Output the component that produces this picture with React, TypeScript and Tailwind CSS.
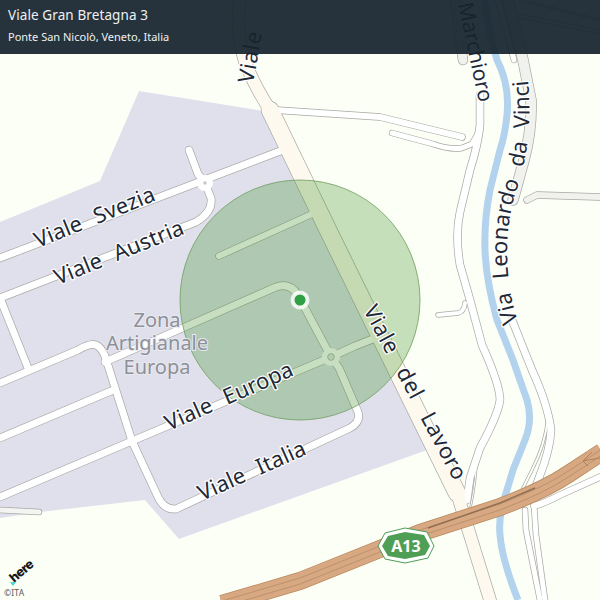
const BG = "#fbfff6";
const CASE = "#a8a8a4";

type Road = { d: string; w: number; fill?: string };

const roads: Road[] = [
  // Zone roads
  { d: "M0 258 L283 150", w: 7 },
  { d: "M189 150 L198 174 L205 183", w: 7 },
  { d: "M0 298 L196 222 Q213 212 211 198 L205 183", w: 7 },
  { d: "M0 298 L28 368", w: 7 },
  { d: "M0 383 L78 350 Q90 343 96 345 Q101 347 105 356 L132 441 L158 497 Q164 510 176 509 L350 428 Q361 422 358 412 L339 368 L331 357", w: 7 },
  { d: "M0 438 L111 391", w: 7 },
  { d: "M0 497 L132 441 L331 357", w: 7 },
  { d: "M105 362 L276 287 Q290 282 298 295 L331 357", w: 7 },
  { d: "M331 357 L355 346 L378 337", w: 7 },
  { d: "M219 256 L312 214", w: 6 },
  { d: "M0 510 L39 512", w: 5, fill: "#f4f4f2" },
  // Other thin roads
  { d: "M275 110 L380 117 L462 137", w: 6 },
  { d: "M392 133 L433 144 Q450 150 462 148 L472 144 L480 130", w: 5 },
  { d: "M455 0 L463 60", w: 9, fill: "#f1f1ee" },
  { d: "M480 95 L480 125 Q478 145 470 170 L460 212 Q455 235 460 265 L470 300 L482 345 Q500 385 500 400 Q498 415 480 448 L470 478 L467 500", w: 7 },
  { d: "M438 315 L458 313 Q464 312 465 303", w: 4 },
  { d: "M477 455 Q476 480 472 500 L470 510", w: 1, fill: "#fbfff6" },
  // Via Leonardo
  { d: "M508 0 L523 60 L531 100 Q532 130 524 160 L513 200", w: 10, fill: "#f1f1ee" },
  { d: "M498 0 L514 60", w: 5 },
  { d: "M512 320 L532 370 Q548 405 551 430 Q550 450 540 475 L531 500", w: 7 },
  { d: "M548 418 Q545 445 532 470 L522 490", w: 2, fill: "#fbfff6" },
  { d: "M525 510 L526 530 L540 600", w: 5 },
  { d: "M534 505 L536 535 L545 600", w: 5 },
  { d: "M534 506 Q545 503 560 495 L600 477", w: 6 },
  { d: "M527 200 L537 195 L600 197", w: 6, fill: "#f1f1ee" },
  { d: "M520 0 L600 20", w: 1, fill: "#fbfff6" },
  { d: "M515 15 L600 32", w: 3 },
  // Viale main
  { d: "M240 0 Q235 30 245 62 Q254 85 270 110", w: 12, fill: "#fdf9ee" },
  { d: "M270 110 L328 230 L457 493", w: 17, fill: "#fdf9ee" },
  { d: "M457 493 L490 600", w: 12, fill: "#fdf9ee" },
];

function Label({ x, y, r, size = 22, ws = 8, ls = 0.1, children }: { x: number; y: number; r: number; size?: number; ws?: number; ls?: number; children: string }) {
  return (
    <text
      x={0}
      y={0}
      transform={`translate(${x} ${y}) rotate(${r})`}
      fontSize={size}
      fill="#1f2a38"
      stroke="#ffffff"
      strokeWidth={2.5}
      strokeLinejoin="round"
      paintOrder="stroke"
      wordSpacing={ws}
      letterSpacing={ls}
      fontFamily="'Noto Sans', sans-serif"
    >
      {children}
    </text>
  );
}

const HW = "M222 604 L300 581 L420 533 L500 507 Q545 490 570 473 L602 452";
const HW1 = "M222 601 L300 578 L420 530 L500 504 Q545 487 570 470 L602 449";
const HW2 = "M222 607 L300 584 L420 536 L500 510 Q545 493 570 476 L602 455";

function Map() {
  return (
    <svg viewBox="0 0 600 600" width={600} height={600} className="absolute inset-0">
      <rect width="600" height="600" fill={BG} />
      <polygon points="139,91 263,111 290,150 427,450 179,539 145,500 40,512 0,518 0,222 100,181" fill="#dfe0ec" />
      {/* river */}
      <path
        d="M485 0 Q488 30 497 60 Q510 85 507 115 Q505 135 500 150 L490 190 Q484 220 485 250 Q486 280 497 320 L513 360 L527 400 Q533 420 525 440 L513 470 L507 490 Q498 515 500 535 Q502 560 518 600"
        fill="none"
        stroke="#b2d2ee"
        strokeWidth={7}
      />
      {/* casings */}
      <g fill="none" strokeLinecap="round" strokeLinejoin="round" stroke={CASE}>
        {roads.map((r, i) => (
          <path key={i} d={r.d} strokeWidth={r.w + 1.4} />
        ))}
      </g>
      <g fill="none" strokeLinecap="round" strokeLinejoin="round">
        {roads.map((r, i) => (
          <path key={i} d={r.d} strokeWidth={r.w} stroke={r.fill ?? "#ffffff"} />
        ))}
      </g>
      {/* roundabouts */}
      <circle cx={205} cy={183} r={8} fill="#fff" />
      <circle cx={205} cy={183} r={1.8} fill="#c9c9c9" />
      <circle cx={331} cy={357} r={9} fill="#fff" />
      <circle cx={331} cy={357} r={3.4} fill="#e4e4e4" stroke={CASE} strokeWidth={0.7} />
      <circle cx={132} cy={441} r={5} fill="#fff" />
      {/* motorway */}
      <path d={HW} fill="none" stroke="#b9895f" strokeWidth={18} />
      <path d={HW} fill="none" stroke="#d7a881" strokeWidth={16.5} />
      <path d={HW1} fill="none" stroke="#b68c67" strokeWidth={0.8} />
      <path d={HW2} fill="none" stroke="#b68c67" strokeWidth={0.8} />
      <path d="M428 528 L500 503 L535 488" fill="none" stroke="#8f6f52" strokeWidth={1.4} />
      <path d="M592 452 L583 461 L600 458 M583 461 L588 466" fill="none" stroke="#ae8258" strokeWidth={1} />
      {/* radius */}
      <circle cx={300} cy={300} r={120} fill="#2f8a18" fillOpacity={0.27} stroke="#6f9d5e" strokeWidth={0.8} />
      {/* labels */}
      <text
        fontSize={20}
        fill="#8d9099"
        textAnchor="middle"
        fontFamily="'Noto Sans', sans-serif"
        stroke="#e9e9f0"
        strokeWidth={2}
        paintOrder="stroke"
      >
        <tspan x={157} y={327}>Zona</tspan>
        <tspan x={157} y={350}>Artigianale</tspan>
        <tspan x={157} y={374}>Europa</tspan>
      </text>
      <Label x={253} y={84} r={-80} ls={0.6}>Viale</Label>
      <Label x={38} y={248} r={-22}>Viale Svezia</Label>
      <Label x={58} y={285} r={-22}>Viale Austria</Label>
      <Label x={169} y={431} r={-24}>Viale Europa</Label>
      <Label x={202} y={501} r={-24}>Viale Italia</Label>
      <Label x={363} y={310} r={62} ws={12} ls={0.5}>Viale del Lavoro</Label>
      <Label x={458} y={4} r={78} size={21} ws={0} ls={0}>Marchioro</Label>
      <path id="leonardo" d="M518 322 C504 280 504 232 515 195 C525 165 534 130 527 72" fill="none" />
      <text
        fontSize={22}
        fill="#1f2a38"
        stroke="#ffffff"
        strokeWidth={2.5}
        strokeLinejoin="round"
        paintOrder="stroke"
        wordSpacing={8}
        fontFamily="'Noto Sans', sans-serif"
      >
        <textPath href="#leonardo">Via Leonardo da Vinci</textPath>
      </text>
      {/* shield */}
      <polygon points="378,546 385,533 405,528 427,532 434,546 428,558 405,563 385,559" fill="#fff" stroke="#4f9e55" strokeWidth={1} />
      <polygon points="382,546 388,536 405,532 424,535 430,546 425,555 405,559 388,556" fill="#4f9e55" />
      <text x={406} y={552} fontSize={16} fontWeight={700} fill="#fff" textAnchor="middle" fontFamily="'Noto Sans', sans-serif">
        A13
      </text>
      {/* here logo */}
      <text
        transform="translate(14 583) rotate(-40)"
        fontSize={13}
        fontWeight={800}
        fill="#15171a"
        fontFamily="'Inter', sans-serif"
        letterSpacing={-0.6}
      >
        here
      </text>
      <polygon points="10,582 16,582 13,586" fill="#48dad0" />
      <text x={4} y={596} fontSize={8.5} fill="#55595e" fontFamily="'Noto Sans', sans-serif" letterSpacing={0.2}>
        ©ITA
      </text>
      {/* marker */}
      <circle cx={300} cy={300} r={9.5} fill="#fff" fillOpacity={0.8} />
      <circle cx={300} cy={300} r={5.5} fill="#2fa043" />
    </svg>
  );
}

export default function App() {
  return (
    <div className="relative w-[600px] h-[600px] overflow-hidden font-['Noto_Sans',sans-serif]">
      <Map />
      <div className="absolute top-0 inset-x-0 h-[54px] bg-[rgba(22,36,45,0.93)] px-2 flex flex-col pt-[5px] text-[#eef1f3]">
        <div className="text-[13.5px] leading-[20px] tracking-[0.1px]">Viale Gran Bretagna 3</div>
        <div className="text-[11px] leading-[16px] mt-[4px]">Ponte San Nicolò, Veneto, Italia</div>
      </div>
    </div>
  );
}
